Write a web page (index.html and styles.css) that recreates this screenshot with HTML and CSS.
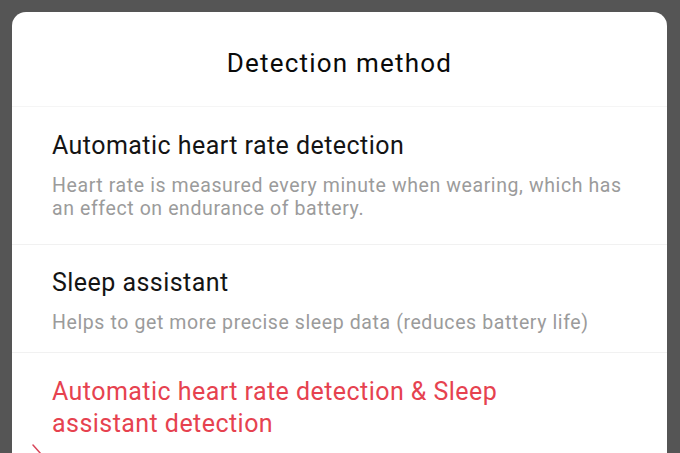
FILE: index.html
```html
<!DOCTYPE html>
<html>
<head>
<meta charset="utf-8">
<link rel="stylesheet" href="styles.css">
</head>
<body>
<div class="sheet">
  <div class="header">Detection method</div>
  <div class="item item-auto">
    <div class="item-title">Automatic heart rate detection</div>
    <div class="item-desc">Heart rate is measured every minute when wearing, which has an effect on endurance of battery.</div>
  </div>
  <div class="item item-sleep">
    <div class="item-title">Sleep assistant</div>
    <div class="item-desc">Helps to get more precise sleep data (reduces battery life)</div>
  </div>
  <div class="item item-last">
    <div class="item-title selected">Automatic heart rate detection &amp; Sleep assistant detection</div>
    <svg class="check" width="14" height="14" viewBox="0 0 14 14"><path d="M2 2 L10 11" stroke="#d8465a" stroke-width="1.5" fill="none" stroke-linecap="round"/></svg>
  </div>
</div>
</body>
</html>
```
FILE: styles.css
```css
html, body {
  margin: 0;
  padding: 0;
  height: 100%;
  overflow: hidden;
}
body {
  background: #555555;
  font-family: Roboto, "Liberation Sans", sans-serif;
}
.sheet {
  margin: 12px 13px 0 12px;
  background: #ffffff;
  border-radius: 14px 14px 0 0;
  height: 460px;
  position: relative;
}
.header {
  height: 95px;
  padding-top: 8px;
  display: flex;
  align-items: center;
  justify-content: center;
  font-size: 26px;
  font-weight: 400;
  letter-spacing: 1.2px;
  color: #0a0a0a;
  border-bottom: 1px solid #f5f5f5;
  box-sizing: border-box;
}
.item {
  padding: 23px 28px 0 40px;
  border-bottom: 1px solid #f1f1f1;
  box-sizing: border-box;
}
.item-auto { height: 138px; padding-top: 24px; }
.item-sleep { height: 108px; padding-top: 23px; }
.item-title {
  font-size: 25px;
  line-height: 30px;
  letter-spacing: 0.45px;
  color: #141414;
}
.item-desc {
  margin-top: 13px;
  font-size: 19.5px;
  line-height: 23px;
  letter-spacing: 0.6px;
  color: #9b9b9b;
}
.item-last {
  border-bottom: none;
  padding-top: 23px;
  position: relative;
}
.selected {
  color: #e6424f;
  line-height: 32px;
  max-width: 500px;
}
.check {
  position: absolute;
  left: 19px;
  top: 90px;
}
```
